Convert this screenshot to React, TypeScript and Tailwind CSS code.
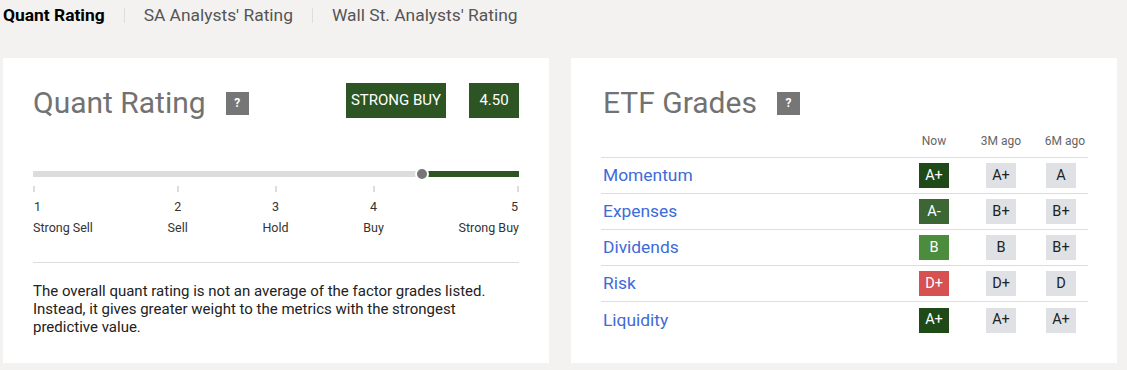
import React from 'react';

type Grade = { label: string; now: string; nowColor: string; m3: string; m6: string };

const grades: Grade[] = [
    { label: 'Momentum', now: 'A+', nowColor: 'bg-[#1f4a17]', m3: 'A+', m6: 'A' },
    { label: 'Expenses', now: 'A-', nowColor: 'bg-[#3c6634]', m3: 'B+', m6: 'B+' },
    { label: 'Dividends', now: 'B', nowColor: 'bg-[#4b8c3d]', m3: 'B', m6: 'B+' },
    { label: 'Risk', now: 'D+', nowColor: 'bg-[#d65252]', m3: 'D+', m6: 'D' },
    { label: 'Liquidity', now: 'A+', nowColor: 'bg-[#1f4a17]', m3: 'A+', m6: 'A+' },
];

const scale = [
    { n: '1', label: 'Strong Sell', align: 'items-start' },
    { n: '2', label: 'Sell', align: 'items-center' },
    { n: '3', label: 'Hold', align: 'items-center' },
    { n: '4', label: 'Buy', align: 'items-center' },
    { n: '5', label: 'Strong Buy', align: 'items-end' },
];

const HelpBox = () => (
    <span className="flex h-[23px] w-[23px] items-center justify-center bg-[#767676] text-[12px] font-bold leading-none text-white">?</span>
);

const App: React.FC = () => {
    return (
        <div className="h-[370px] w-[1127px] overflow-hidden bg-[#f4f2f1] font-['Roboto',sans-serif]">
            {/* Tabs */}
            <div className="flex h-[31px] items-center pl-[3px] text-[17.4px]">
                <span className="font-bold text-black">Quant Rating</span>
                <span className="mx-[19px] h-[15px] w-px bg-[#dddddd]"></span>
                <span className="text-[#555555]">SA Analysts' Rating</span>
                <span className="mx-[19px] h-[15px] w-px bg-[#dddddd]"></span>
                <span className="text-[#555555]">Wall St. Analysts' Rating</span>
            </div>

            <div className="mt-[27px] flex gap-[22px] pl-[3px]">
                {/* Left: Quant rating */}
                <div className="h-[305px] w-[546px] bg-white px-[30px] pt-[25px]">
                    <div className="flex items-start justify-between">
                        <div className="mt-[2px] flex items-center gap-[20px]">
                            <h2 className="text-[30px] leading-[36px] text-[#727272]">Quant Rating</h2>
                            <HelpBox />
                        </div>
                        <div className="flex gap-[23px]">
                            <span className="flex h-[35px] w-[100px] items-center justify-center bg-[#2c5523] text-[15px] text-white">STRONG BUY</span>
                            <span className="flex h-[35px] w-[50px] items-center justify-center bg-[#2c5523] text-[15px] text-white">4.50</span>
                        </div>
                    </div>

                    <div className="relative mt-[50px] h-[6px] bg-[#dcdcdc]">
                        <div className="absolute bottom-0 left-[81%] right-0 top-0 bg-[#2c5523]"></div>
                        <div className="absolute left-[80%] top-1/2 h-[14px] w-[14px] -translate-x-1/2 -translate-y-1/2 rounded-full border-2 border-white bg-[#767676]"></div>
                    </div>

                    <div className="mt-[9px] flex justify-between text-[12.5px] leading-[16px] text-[#333333]">
                        {scale.map(s => (
                            <div key={s.n} className={`flex flex-col ${s.align}`}>
                                <span className="h-[6px] w-[2px] bg-[#dddddd]"></span>
                                <span className="mt-[7px] px-[1px]">{s.n}</span>
                                <span className="mt-[5px]">{s.label}</span>
                            </div>
                        ))}
                    </div>

                    <div className="mt-[26px] h-px bg-[#dddddd]"></div>

                    <p className="mt-[19px] max-w-[475px] text-[15px] leading-[18px] text-[#222222]">
                        The overall quant rating is not an average of the factor grades listed. Instead, it gives greater weight to the metrics with the strongest predictive value.
                    </p>
                </div>

                {/* Right: ETF grades */}
                <div className="h-[305px] w-[546px] bg-white pl-[30px] pr-[29px] pt-[25px]">
                    <div className="mt-[2px] flex items-center gap-[20px] pl-[2px]">
                        <h2 className="text-[30px] leading-[36px] text-[#727272]">ETF Grades</h2>
                        <HelpBox />
                    </div>

                    <div className="mt-[12px] grid grid-cols-[1fr_68px_66px_54px] border-b border-[#dddddd] pb-[8px] text-[12px] leading-[16px] text-[#666666]">
                        <span></span>
                        <span className="text-center">Now</span>
                        <span className="text-center">3M ago</span>
                        <span className="pr-[3px] text-right">6M ago</span>
                    </div>

                    {grades.map((g, i) => (
                        <div
                            key={g.label}
                            className={`grid h-[36px] grid-cols-[1fr_68px_66px_54px] items-center ${i < grades.length - 1 ? 'border-b border-[#dddddd]' : ''}`}
                        >
                            <span className="pl-[2px] text-[17.4px] text-[#3d6bd9]">{g.label}</span>
                            <span className={`mx-auto flex h-[25px] w-[30px] items-center justify-center text-[14.5px] text-white ${g.nowColor}`}>{g.now}</span>
                            <span className="mx-auto flex h-[25px] w-[30px] items-center justify-center bg-[#e0e1e4] text-[14.5px] text-[#222222]">{g.m3}</span>
                            <span className="mx-auto flex h-[25px] w-[30px] items-center justify-center bg-[#e0e1e4] text-[14.5px] text-[#222222]">{g.m6}</span>
                        </div>
                    ))}
                </div>
            </div>
        </div>
    );
};

export default App;
